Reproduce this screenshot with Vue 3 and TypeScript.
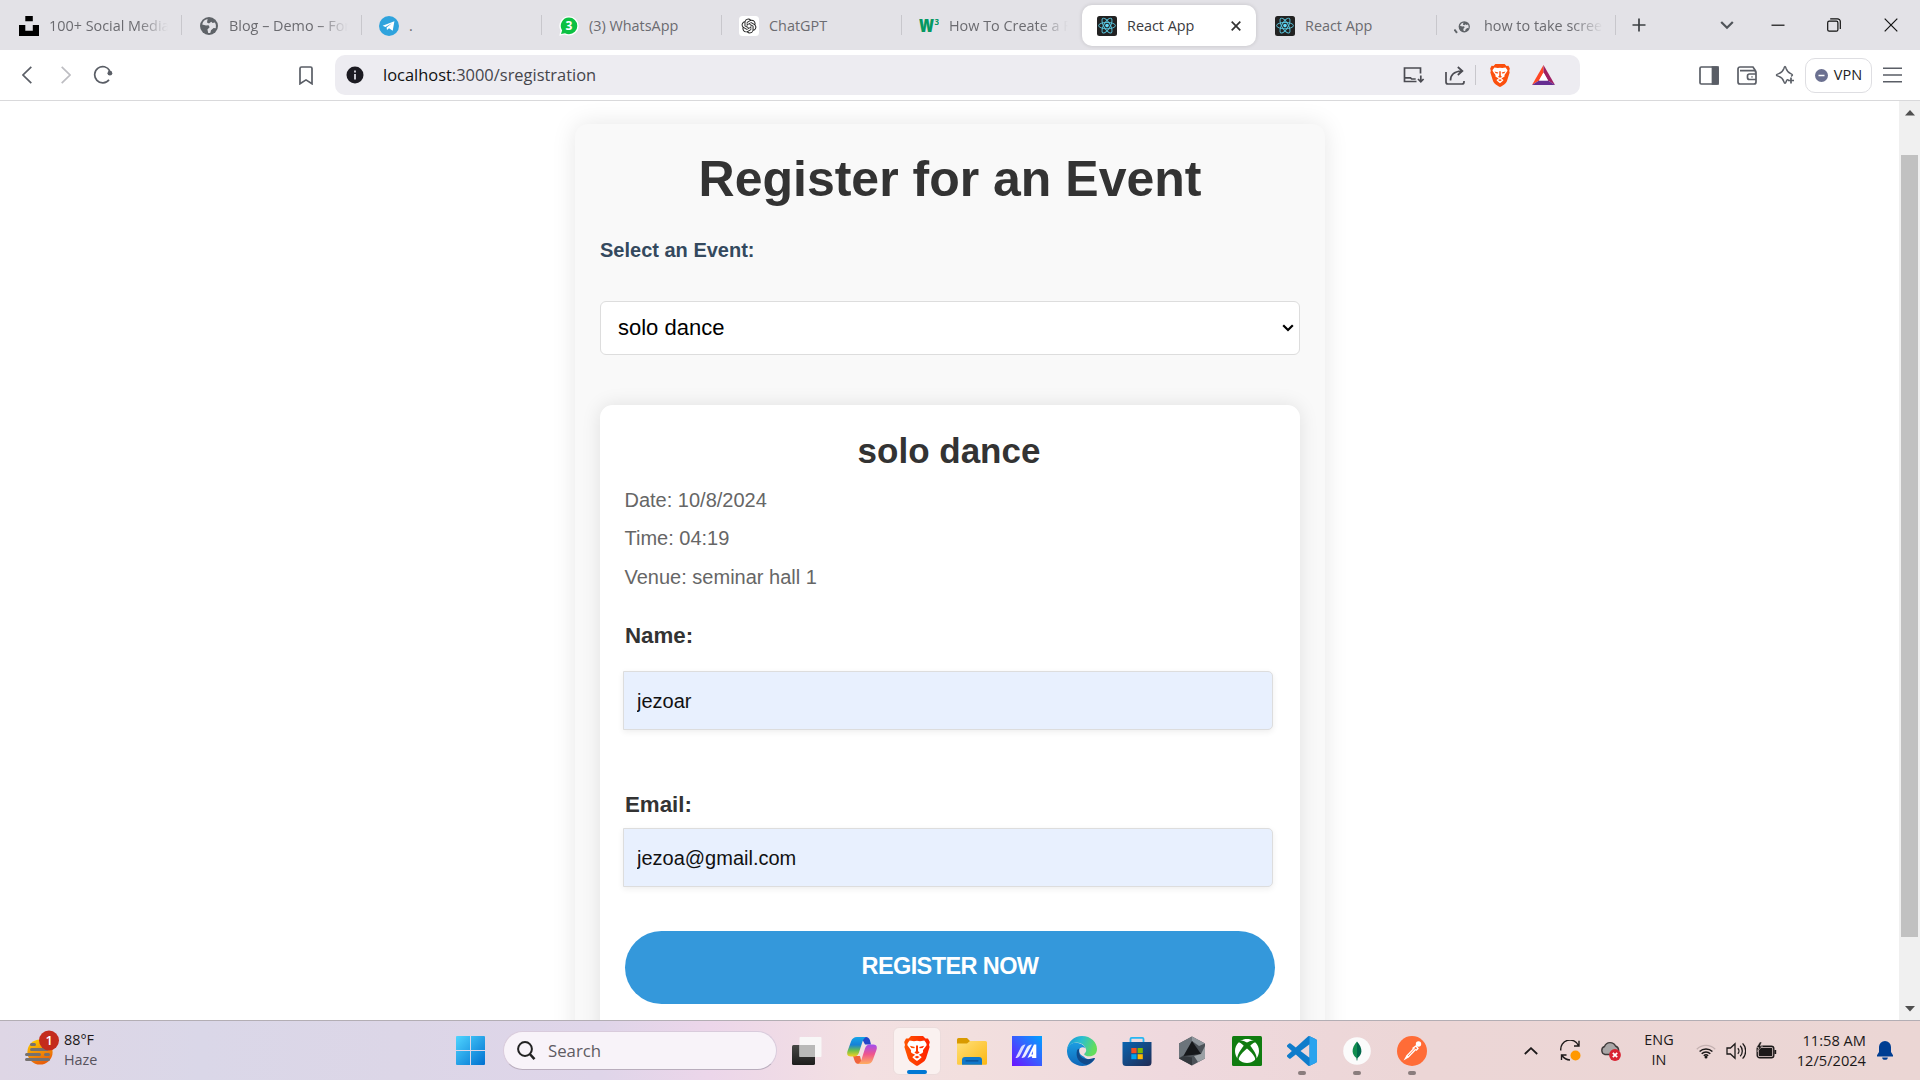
<script setup lang="ts">
import { ref } from 'vue'

interface Tab {
  icon: string
  title: string
  faded?: boolean
  active?: boolean
  divider?: boolean
}

const tabs: Tab[] = [
  { icon: 'unsplash', title: '100+ Social Media', faded: true, divider: true },
  { icon: 'globe', title: 'Blog – Demo – Forum', faded: true, divider: true },
  { icon: 'telegram', title: '.', divider: true },
  { icon: 'whatsapp', title: '(3) WhatsApp', divider: true },
  { icon: 'chatgpt', title: 'ChatGPT', divider: true },
  { icon: 'w3', title: 'How To Create a Form', faded: true },
  { icon: 'react', title: 'React App', active: true },
  { icon: 'react', title: 'React App', divider: true },
  { icon: 'search-globe', title: 'how to take screenshot', faded: true, divider: true },
]

const apps = [
  { id: 'taskview' },
  { id: 'copilot' },
  { id: 'brave', state: 'focused' },
  { id: 'folder' },
  { id: 'myasus' },
  { id: 'edge' },
  { id: 'store' },
  { id: 'crate' },
  { id: 'xbox' },
  { id: 'vscode', state: 'open' },
  { id: 'mongo', state: 'open' },
  { id: 'postman', state: 'open' },
]

const selected = ref('solo dance')
const details = ['Date: 10/8/2024', 'Time: 04:19', 'Venue: seminar hall 1']
const name = ref('jezoar')
const email = ref('jezoa@gmail.com')
</script>

<template>
  <div class="screen">
    <svg class="defs" width="0" height="0">
      <defs>
        <symbol id="lion" viewBox="0 0 26 30">
          <path d="M13 0 L19 0 L21.5 2.6 L24 2.4 L25.8 6 L25 9 L25.6 11 L22 22.5 Q21 25 18.5 26.6 L14.5 29.3 Q13 30.4 11.5 29.3 L7.5 26.6 Q5 25 4 22.5 L.4 11 L1 9 L.2 6 L2 2.4 L4.5 2.6 L7 0Z" />
          <path fill="#fff" d="M13 4.8 L16 5.3 L20.3 4.6 Q23 7.6 22.6 9.2 L18.9 14.2 Q19.7 16.6 17.4 17.4 L14.8 18.8 L17.6 21 Q17.8 21.6 13 25 Q8.200 21.6 8.400 21 L11.200 18.800 L8.600 17.400 Q6.300 16.600 7.100 14.200 L3.400 9.200 Q3 7.600 5.700 4.600 L10 5.300Z" />
          <path d="M5.800 9.800 L10.800 11 L10.300 12.300 L7.400 12Z M20.200 9.800 L15.200 11 L15.700 12.300 L18.600 12Z M12 9.500 L14 9.500 L14 15 L15.600 16.800 L13 18 L10.400 16.800 L12 15Z M10.400 21 L13 19.800 L15.600 21 L13 22.600Z" />
        </symbol>
        <symbol id="globe" viewBox="0 0 20 20">
          <circle cx="10" cy="10" r="9" fill="#5f6368" />
          <path fill="#e3e2e7" d="M8.600 3 Q4 4 3.200 8.400 L7 9.600 L9.600 9.200 L10.600 11.200 L8.400 13.600 L9.200 16.900 Q10.600 17.100 11.400 16.800 L12 14.200 L14.600 12 L16.800 12.200 Q17.600 9 16 6.400 L13.600 7 L12.200 5.800 L10 7.400 L8 6.600Z" />
        </symbol>
        <linearGradient id="gWin" x1="0" y1="0" x2="1" y2="1"><stop offset="0" stop-color="#4fd5ff" /><stop offset="1" stop-color="#0070d0" /></linearGradient>
        <linearGradient id="gSun" x1="0" y1="0" x2=".4" y2="1"><stop offset="0" stop-color="#ffd500" /><stop offset="1" stop-color="#e8600a" /></linearGradient>
        <linearGradient id="gBrave" x1="0" y1="0" x2="1" y2="0"><stop offset="0" stop-color="#ff5500" /><stop offset="1" stop-color="#ff1f00" /></linearGradient>
        <linearGradient id="gCopA" x1="0" y1="0" x2="0" y2="1"><stop offset="0" stop-color="#16a5e8" /><stop offset=".4" stop-color="#1681d8" /><stop offset=".7" stop-color="#6fbf4b" /><stop offset="1" stop-color="#f5d020" /></linearGradient>
        <linearGradient id="gCopB" x1="0" y1="0" x2="0" y2="1"><stop offset="0" stop-color="#a24cf0" /><stop offset=".5" stop-color="#f0558c" /><stop offset="1" stop-color="#ffb060" /></linearGradient>
        <linearGradient id="gFold" x1="0" y1="0" x2="1" y2="1"><stop offset="0" stop-color="#ffe07a" /><stop offset="1" stop-color="#fcb813" /></linearGradient>
        <linearGradient id="gAsus" x1="1" y1="0" x2="0" y2="1"><stop offset="0" stop-color="#00a2ff" /><stop offset=".5" stop-color="#3a5cff" /><stop offset="1" stop-color="#6a12ff" /></linearGradient>
        <linearGradient id="gEdgeA" x1="0" y1="0" x2="1" y2=".3"><stop offset="0" stop-color="#1690d8" /><stop offset=".5" stop-color="#2bbfd0" /><stop offset="1" stop-color="#62dd5c" /></linearGradient>
        <linearGradient id="gEdgeB" x1="0" y1="0" x2="0" y2="1"><stop offset="0" stop-color="#1b9de2" /><stop offset="1" stop-color="#0f66b8" /></linearGradient>
        <linearGradient id="gStore" x1="0" y1="0" x2="1" y2="1"><stop offset="0" stop-color="#0a64b0" /><stop offset="1" stop-color="#202c54" /></linearGradient>
        <linearGradient id="gView" x1="0" y1="0" x2="0" y2="1"><stop offset="0" stop-color="#474745" /><stop offset="1" stop-color="#1d1d1c" /></linearGradient>
      </defs>
    </svg>

    <header class="tabstrip">
      <div v-for="(tab, i) in tabs" :key="i" class="tab" :class="{ active: tab.active }">
        <svg class="favicon" viewBox="0 0 20 20">
          <path v-if="tab.icon === 'unsplash'" d="M6.300 0h7.500v5.300H6.300zM0 9h6.300v5.700h7.500V9H20v11H0z" />
          <use v-else-if="tab.icon === 'globe'" href="#globe" />
          <template v-else-if="tab.icon === 'telegram'">
            <circle cx="10" cy="10" r="10" fill="#2fa3dd" />
            <path fill="#fff" d="M3.600 9.700 L15.400 5.200 L13.700 14.800 L10 12.200 L8 14 L7.600 11.500 L12.800 7.300 L6.400 11.100Z" />
          </template>
          <template v-else-if="tab.icon === 'whatsapp'">
            <path d="M10 .2a9.700 9.700 0 0 1 0 19.400a10 10 0 0 1-4.300-1L.3 19.800 1.500 14.600A9.700 9.700 0 0 1 10 .2z" fill="#fff" />
            <path d="M10 1.600a8.300 8.300 0 0 1 0 16.600a8.500 8.500 0 0 1-4-1L2 18l1.100-3.600A8.300 8.300 0 0 1 10 1.600z" fill="#0cc143" />
            <text x="10" y="14.200" text-anchor="middle" class="wa-count">3</text>
          </template>
          <template v-else-if="tab.icon === 'chatgpt'">
            <rect width="20" height="20" rx="3.500" fill="#fff" />
            <path transform="translate(2.600 2.600) scale(.617)" fill="#222" d="M22.2819 9.8211a5.9847 5.9847 0 0 0-.5157-4.9108 6.0462 6.0462 0 0 0-6.5098-2.9A6.0651 6.0651 0 0 0 4.9807 4.1818a5.9847 5.9847 0 0 0-3.9977 2.9 6.0462 6.0462 0 0 0 .7427 7.0966 5.98 5.98 0 0 0 .511 4.9107 6.051 6.051 0 0 0 6.5146 2.9001A5.9847 5.9847 0 0 0 13.2599 24a6.0557 6.0557 0 0 0 5.7718-4.2058 5.9894 5.9894 0 0 0 3.9977-2.9001 6.0557 6.0557 0 0 0-.7475-7.0729zm-9.022 12.6081a4.4755 4.4755 0 0 1-2.8764-1.0408l.1419-.0804 4.7783-2.7582a.7948.7948 0 0 0 .3927-.6813v-6.7369l2.02 1.1686a.071.071 0 0 1 .038.052v5.5826a4.504 4.504 0 0 1-4.4945 4.4944zm-9.6607-4.1254a4.4708 4.4708 0 0 1-.5346-3.0137l.142.0852 4.783 2.7582a.7712.7712 0 0 0 .7806 0l5.8428-3.3685v2.3324a.0804.0804 0 0 1-.0332.0615L9.74 19.9502a4.4992 4.4992 0 0 1-6.1408-1.6464zM2.3408 7.8956a4.485 4.485 0 0 1 2.3655-1.9728V11.6a.7664.7664 0 0 0 .3879.6765l5.8144 3.3543-2.0201 1.1685a.0757.0757 0 0 1-.071 0l-4.8303-2.7865A4.504 4.504 0 0 1 2.3408 7.872zm16.5963 3.8558L13.1038 8.364 15.1192 7.2a.0757.0757 0 0 1 .071 0l4.8303 2.7913a4.4944 4.4944 0 0 1-.6765 8.1042v-5.6772a.79.79 0 0 0-.407-.667zm2.0107-3.0231l-.142-.0852-4.7735-2.7818a.7759.7759 0 0 0-.7854 0L9.409 9.2297V6.8974a.0662.0662 0 0 1 .0284-.0615l4.8303-2.7866a4.4992 4.4992 0 0 1 6.6802 4.66zM8.3065 12.863l-2.02-1.1638a.0804.0804 0 0 1-.038-.0567V6.0742a4.4992 4.4992 0 0 1 7.3757-3.4537l-.142.0805L8.704 5.459a.7948.7948 0 0 0-.3927.6813zm1.0976-2.3654l2.602-1.4998 2.6069 1.4998v2.9994l-2.5974 1.4997-2.6067-1.4997Z" />
          </template>
          <template v-else-if="tab.icon === 'w3'">
            <text x="0" y="16" class="w3-w" textLength="15" lengthAdjust="spacingAndGlyphs">w</text>
            <text x="15.400" y="8.800" class="w3-n">3</text>
          </template>
          <template v-else-if="tab.icon === 'react'">
            <rect width="20" height="20" rx="2.500" fill="#222" />
            <g fill="none" stroke="#58c4dc" stroke-width=".95">
              <ellipse cx="10" cy="9.600" rx="8.400" ry="3.200" />
              <ellipse cx="10" cy="9.600" rx="8.400" ry="3.200" transform="rotate(60 10 9.600)" />
              <ellipse cx="10" cy="9.600" rx="8.400" ry="3.200" transform="rotate(120 10 9.600)" />
            </g>
            <circle cx="10" cy="9.600" r="1.800" fill="#61dafb" />
          </template>
          <template v-else>
            <use href="#globe" x="4" y="4.500" width="12.500" height="12.500" />
            <path d="M.4 13.500l2.600 3.300" stroke="#5f6368" stroke-width="2" />
          </template>
        </svg>
        <span class="tab-title" :class="{ faded: tab.faded }">{{ tab.title }}</span>
        <svg v-if="tab.active" class="tab-close" viewBox="0 0 10 10"><path d="M.7.7l8.600 8.600M9.300.7L.7 9.300" /></svg>
        <i v-if="tab.divider" class="divider"></i>
      </div>
      <svg class="new-tab" viewBox="0 0 14 14"><path d="M7 .5v13M.5 7h13" /></svg>
      <div class="window-controls">
        <svg viewBox="0 0 14 14" class="chev"><path d="M1.200 4l5.800 5.800L12.800 4" /></svg>
        <svg viewBox="0 0 14 14"><path d="M.5 7.200h13" /></svg>
        <svg viewBox="0 0 14 14"><rect x=".7" y="3.200" width="10.200" height="10" rx="1.500" /><path d="M3.200.8h7.300a2.800 2.800 0 0 1 2.800 2.800v7.300" /></svg>
        <svg viewBox="0 0 14 14" class="close"><path d="M.7.7l12.600 12.600M13.300.7L.7 13.300" /></svg>
      </div>
    </header>

    <nav class="toolbar">
      <div class="nav-buttons">
        <svg width="10" height="18" viewBox="0 0 10 18"><path d="M9.300.8L1 9l8.300 8.200" /></svg>
        <svg class="dim" width="10" height="18" viewBox="0 0 10 18"><path d="M.7.8L9 9 .7 17.200" /></svg>
        <svg width="20" height="20" viewBox="0 0 20 20"><path d="M16 14.800A8 8.200 0 1 1 16.800 6" /><circle cx="16.900" cy="8.200" r="2.400" fill="#5a5e66" stroke="none" /></svg>
        <svg class="bookmark" width="14" height="19" viewBox="0 0 14 19"><path d="M1 2.500A1.500 1.500 0 0 1 2.500 1h9A1.500 1.500 0 0 1 13 2.500V17.800L7 13.900l-6 3.900z" /></svg>
      </div>
      <div class="omnibox">
        <svg width="18" height="18" viewBox="0 0 18 18"><circle cx="9" cy="9" r="8.500" fill="#1c1b22" /><path d="M9 4.500v2M9 8v5.500" stroke="#c9c8cf" stroke-width="2" /></svg>
        <span class="url"><b>localhost</b>:3000/sregistration</span>
        <svg class="install" width="22" height="16" viewBox="0 0 22 16"><path d="M17.500 6.500V1H1.500v13.500h12M1.500 10.800h6l1.200 1.200h4M17.800 8.500v6M15 12l2.800 2.800L20.600 12" /></svg>
        <svg class="share" width="20" height="19" viewBox="0 0 20 19"><path d="M1 6v10a2 2 0 0 0 2 2h14a2 2 0 0 0 2-2v-1M5.500 14.500C5.500 9 8.500 5.500 16.500 5M12.800 1l4.600 4-4.600 4" /></svg>
        <i class="divider"></i>
        <svg class="shield" width="20" height="23" viewBox="0 0 26 30" fill="#fb4f0d"><use href="#lion" /></svg>
        <svg class="bat" width="23" height="20" viewBox="0 0 23 20"><path fill="#ff4724" d="M11.500 0L0 20l7-4.400 4.500-8z" /><path fill="#9e1f63" d="M11.500 0L23 20l-7-4.400-4.500-8z" /><path fill="#662d91" d="M0 20h23l-7-4.400H7z" /><path fill="#fff" d="M11.500 7.600l4.500 8H7z" /></svg>
      </div>
      <div class="actions">
        <svg width="20" height="19" viewBox="0 0 20 19"><rect x="1" y="1" width="18" height="17" rx="1.300" /><path d="M13.500 1H19v17h-5.500z" fill="#5a5e66" /></svg>
        <svg width="20" height="19" viewBox="0 0 20 19"><path d="M18.500 6.500V4.800L16 1H3A2 2 0 0 0 1 3v13a2 2 0 0 0 2 2h14a2 2 0 0 0 2-2V6.500a1.800 1.800 0 0 0-1.800-1.800H3M19 8h-6.500a2 2 0 0 0-2 2v1.500a2 2 0 0 0 2 2H19M14.500 10.800h1" /></svg>
        <svg width="20" height="20" viewBox="0 0 20 20"><path d="M13.500 15Q12 14 11.200 16.500Q10 20 8.800 16.500Q7.500 12.500 3.800 11.400Q-1 10 3.800 8.600Q7.500 7.500 8.800 3.800Q10 -1 11.200 3.800Q12.500 7.500 15.800 8.600Q19 10 16 11.200" stroke-width="1.500" /><path d="M16 12.500v6M13 15.500h6" /></svg>
        <button class="vpn"><svg width="13" height="13" viewBox="0 0 13 13"><circle cx="6.500" cy="6.500" r="6.500" fill="#6b7090" /><path d="M3.500 6.500h6" stroke="#fff" stroke-width="1.500" /></svg>VPN</button>
        <svg width="19" height="16" viewBox="0 0 19 16"><path d="M0 1.200h19M0 8h19M0 14.800h19" stroke-width="1.600" /></svg>
      </div>
    </nav>

    <div class="viewport">
      <main class="page">
        <section class="panel">
          <h1>Register for an Event</h1>
          <label class="select-label">Select an Event:</label>
          <div class="select-wrap">
            <select v-model="selected"><option>solo dance</option></select>
            <svg width="12" height="8" viewBox="0 0 12 8"><path d="M1.200 1.200L6 6l4.800-4.800" /></svg>
          </div>
          <form class="event" @submit.prevent>
            <h2>{{ selected }}</h2>
            <p v-for="line in details" :key="line">{{ line }}</p>
            <label class="name-label">Name:</label>
            <input v-model="name" type="text" class="name-input" />
            <label class="email-label">Email:</label>
            <input v-model="email" type="text" class="email-input" />
            <button class="submit">REGISTER NOW</button>
          </form>
        </section>
      </main>
      <aside class="scrollbar">
        <svg width="10" height="6" viewBox="0 0 10 6"><path d="M5 0l5 5.500H0z" /></svg>
        <div class="thumb"></div>
        <svg width="10" height="6" viewBox="0 0 10 6"><path d="M5 5.500L0 0h10z" /></svg>
      </aside>
    </div>

    <footer class="taskbar">
      <div class="weather">
        <svg width="34" height="36" viewBox="0 0 34 36">
          <circle cx="15" cy="22" r="12.600" fill="url(#gSun)" />
          <g stroke="#757170" stroke-width="3" stroke-linecap="round"><path d="M6.500 14.500h3M6.500 19.500H22M1.500 24.500h13M20.500 24.500h3M1.500 29.500h22" /></g>
          <circle cx="24" cy="10.500" r="10" fill="#c42b1c" />
          <text x="24.200" y="15.300" text-anchor="middle" class="badge">1</text>
        </svg>
        <div class="weather-text"><span>88°F</span><span class="muted">Haze</span></div>
      </div>
      <svg class="start" width="29" height="29" viewBox="0 0 29 29"><path fill="url(#gWin)" d="M1 0h13v14H0V1a1 1 0 0 1 1-1zM15 0h13a1 1 0 0 1 1 1v13H15zM0 15h14v14H1a1 1 0 0 1-1-1zM15 15h14v13a1 1 0 0 1-1 1H15z" /></svg>
      <div class="search">
        <svg width="19" height="20" viewBox="0 0 19 20"><circle cx="8" cy="8" r="6.900" /><path d="M12.800 13l4.700 5.200" stroke-width="2.600" /></svg>
        <span>Search</span>
      </div>
      <div class="apps">
        <div v-for="app in apps" :key="app.id" class="app" :class="app.state">
          <svg v-if="app.id === 'taskview'" width="30" height="30" viewBox="0 0 30 30"><rect x="0" y="9" width="23" height="20" rx="1.500" fill="url(#gView)" /><rect x="7.500" y="1" width="22" height="20" rx="1" fill="#f8f8f8" fill-opacity=".92" /><path d="M7.500 9H23v12H7.500z" fill="#b9b9b8" /></svg>
          <svg v-else-if="app.id === 'copilot'" width="30" height="30" viewBox="0 0 30 30">
            <path fill="#2447c9" d="M14 1h5q3 0 4 3.500l1 4h-6z" />
            <path fill="#f0643c" d="M6 20h7l2 8h-3q-3.500 0-4.500-3.500z" />
            <path fill="url(#gCopA)" d="M10 1h9q-2.500 1-3.500 4.500L12 16.500Q10.800 20.500 7 20.500H4Q-.8 20.500.4 15.500L4 5.500Q5.500 1 10 1z" />
            <path fill="url(#gCopB)" d="M20 28h-9q2.500-1 3.500-4.500L18 12.500Q19.200 8.500 23 8.500h3q4.800 0 3.600 5L26 23.500Q24.500 28 20 28z" />
          </svg>
          <svg v-else-if="app.id === 'brave'" width="26" height="30" viewBox="0 0 26 30" fill="url(#gBrave)"><use href="#lion" /></svg>
          <svg v-else-if="app.id === 'folder'" width="30" height="30" viewBox="0 0 30 30"><path d="M0 3.500A1.500 1.500 0 0 1 1.500 2H10l3 3v6H0z" fill="#d99a00" /><path d="M0 7.500h10L13 5h15.500A1.500 1.500 0 0 1 30 6.500v21a1.200 1.200 0 0 1-1.200 1.200H1.200A1.200 1.200 0 0 1 0 27.500z" fill="url(#gFold)" /><path d="M5 28.700V24a3 3 0 0 1 3-3h14a3 3 0 0 1 3 3v4.700z" fill="#0f77c9" /><path d="M9 24.800h12" stroke="#0a4f91" stroke-width="1.200" stroke-linecap="round" /></svg>
          <svg v-else-if="app.id === 'myasus'" width="30" height="30" viewBox="0 0 30 30"><path d="M0 0h30v30H0z" fill="url(#gAsus)" /><path d="M3.500 22L8.500 12Q10 8.500 13.500 8.500L8.500 18.500Q7 22 3.500 22z" fill="#fff" fill-opacity=".8" /><path d="M9.500 22L14.500 12Q16 8.500 20 8.500L14.500 18.500Q13 22 9.500 22z" fill="#fff" fill-opacity=".9" /><path d="M15.500 22L22 8.500h2.300V22h-4.200v-1.500h-1.200z" fill="#fff" /><path d="M19.300 18.500h1.600v-3.600z" fill="#3a5cff" /></svg>
          <svg v-else-if="app.id === 'edge'" width="30" height="30" viewBox="0 0 30 30">
            <path fill="url(#gEdgeB)" d="M0 14C1 8 6 6 11 7c5 1 8 4 8 7.500 0 3-2 4-2 5.500 0 2 3 3.200 6 3.200 2.500 0 4.500-1.200 5-.700C25.500 27 21 30 15.500 30 6.500 30-.5 23 0 14z" />
            <path fill="#114a8b" d="M10 14.500c-1.500 6 1 12.500 9.500 14.200 3.500-1 6.500-3 8.300-5.900.3-.6-.2-1-.8-.7C18 25.500 10.500 21 12.200 13c.2-.8-1.700.3-2.200 1.500z" />
            <path fill="url(#gEdgeA)" d="M0 14C.7 6 7 0 15 0c9 0 15 6.500 15 13 0 5-3.500 7.300-7.500 7.300-3.500 0-5.300-1.300-5.300-2.100 0-.7 1.800-1.500 1.800-4.200C19 9.500 14 6.500 9.500 6.500 5 6.500 1 9.500 0 14z" />
            <path fill="#f1dcdf" d="M12.200 14.500c0-2 1.500-3.200 3.500-3.200 2.300 0 3.500 1.200 3.500 3 0 2.500-2 3-2 4.200 0 1 1.300 2 3.500 2.200-4.500.9-8.500-2-8.500-6.200z" />
          </svg>
          <svg v-else-if="app.id === 'store'" width="30" height="30" viewBox="0 0 30 30"><path d="M8.500 7V3A1.200 1.200 0 0 1 9.700 1.800h10.600A1.200 1.200 0 0 1 21.500 3v4" fill="none" stroke="#27b7f2" stroke-width="1.800" /><path d="M.5 6h29v20.500a3.500 3.500 0 0 1-3.500 3.500H4a3.500 3.500 0 0 1-3.500-3.500z" fill="url(#gStore)" /><path fill="#f25022" d="M9.300 12h5.300v5.200H9.300z" /><path fill="#7fba00" d="M15.600 12h5.200v5.200h-5.200z" /><path fill="#00a4ef" d="M9.300 18.200h5.300v5H9.300z" /><path fill="#ffb900" d="M15.600 18.200h5.200v5h-5.200z" /></svg>
          <svg v-else-if="app.id === 'crate'" width="30" height="30" viewBox="0 0 30 30"><path fill="#4b5157" d="M15 .5L28 7.500v15L15 29.500 2 22.500v-15z" /><path fill="#90979d" d="M15 .5L28 7.500 22 10 15 5z" /><path fill="#6c747b" d="M2 7.500L15 .5v4.500L7 19 2 22z" /><path fill="#16181b" d="M15 5L24 18 6.500 20z" /><path fill="#33383d" d="M2 22.500L6.500 20 15 21.500v8z" /><path fill="#9ba1a5" d="M28 10v12.500L21 26 17 20l7-2z" /></svg>
          <svg v-else-if="app.id === 'xbox'" width="30" height="30" viewBox="0 0 30 30"><rect width="30" height="30" rx="1.500" fill="#107c10" /><path transform="translate(3 3)" fill="#fff" d="M4.102 21.033C6.211 22.881 8.977 24 12 24c3.026 0 5.789-1.119 7.902-2.967 1.877-1.912-4.316-8.709-7.902-11.417-3.582 2.708-9.779 9.505-7.898 11.417zm11.16-14.406c2.500 2.961 7.484 10.313 6.076 12.912C23.002 17.480 24 14.861 24 12.004c0-3.340-1.365-6.362-3.570-8.536 0 0-.027-.022-.082-.042-.063-.022-.152-.045-.281-.045-.592 0-1.985.434-4.805 3.246zM3.654 3.426c-.057.020-.082.041-.086.042C1.365 5.642 0 8.664 0 12.004c0 2.854.998 5.473 2.661 7.533-1.401-2.605 3.579-9.951 6.080-12.910-2.820-2.813-4.216-3.245-4.806-3.245-.131 0-.223.021-.281.046v-.002zM12 3.551S9.055 1.828 6.755 1.746c-.903-.033-1.454.295-1.521.339C7.379.646 9.659 0 11.984 0H12c2.334 0 4.605.646 6.766 2.085-.068-.046-.615-.372-1.520-.339C14.946 1.828 12 3.545 12 3.545v.006z" /></svg>
          <svg v-else-if="app.id === 'vscode'" width="30" height="30" viewBox="0 0 24 24"><path fill="#0f7ccb" d="M23.15 2.587L18.210.21a1.494 1.494 0 0 0-1.705.29l-9.460 8.630-4.120-3.128a.999.999 0 0 0-1.276.057L.327 7.261A1 1 0 0 0 .326 8.740L3.899 12 .326 15.260a1 1 0 0 0 .001 1.479L1.650 17.940a.999.999 0 0 0 1.276.057l4.120-3.128 9.460 8.630a1.492 1.492 0 0 0 1.704.29l4.942-2.377A1.500 1.500 0 0 0 24 20.060V3.939a1.500 1.500 0 0 0-.85-1.352zm-5.146 14.861L10.826 12l7.178-5.448v10.896z" /><path fill="#2ba3ee" d="M18 .2l5.150 2.387a1.500 1.500 0 0 1 .85 1.352V20.060a1.500 1.500 0 0 1-.85 1.352L18 23.800z" /></svg>
          <svg v-else-if="app.id === 'mongo'" width="30" height="30" viewBox="0 0 30 30"><circle cx="15" cy="15" r="13.800" fill="#fbfbfb" /><path fill="#00684a" d="M15 5.500C18 9 19.600 12 19.400 15.500c-.2 3-1.800 5-3.800 6.500l-.3 2.500h-.6z" /><path fill="#118d4f" d="M15 5.500C12 9 10.400 12 10.600 15.500c.2 3 1.800 5 3.800 6.500l.6 2.500z" /></svg>
          <svg v-else width="30" height="30" viewBox="0 0 30 30"><circle cx="15" cy="15" r="15" fill="#ff6c37" /><path fill="#fff" d="M6.500 24.500l3-5.200L17 11.500l2.300 2.300-7.600 7.600z" /><circle cx="21.500" cy="8" r="2.700" fill="#fff" /><path d="M11 20l8-8.500" stroke="#ff6c37" stroke-width=".8" /><path d="M15.500 12.500l3.500-2.500 2 2.500-2 2" fill="none" stroke="#fff" stroke-width="1.300" /></svg>
          <i v-if="app.state" class="mark"></i>
        </div>
      </div>
      <div class="tray">
        <svg class="t-up" width="14" height="8" viewBox="0 0 14 8"><path d="M.8 7L7 1.200 13.200 7" /></svg>
        <svg class="t-sync" width="21" height="21" viewBox="0 0 21 21"><path d="M.8 10.500A9.300 9.300 0 0 1 18.500 5.500M19 .8v5.200h-5M1.500 20v-5h5M2 15.500Q5 19.800 10 20" stroke-width="1.400" /><circle cx="15.500" cy="15.500" r="5" fill="#ff9800" stroke="none" /></svg>
        <svg class="t-cloud" width="21" height="20" viewBox="0 0 21 20"><path d="M5 13.500a4.200 4.200 0 0 1-.5-8A6 6 0 0 1 15.500 5q3 1 3.200 4.500L14 13.500z" fill="#a9a6a6" stroke="#3f3b3b" stroke-width="1.400" /><circle cx="15" cy="14" r="5.900" fill="#d92332" stroke="none" /><path d="M12.800 11.800l4.400 4.400M17.200 11.800l-4.400 4.400" stroke="#fff" stroke-width="1.700" /></svg>
        <div class="lang"><span>ENG</span><span>IN</span></div>
        <svg class="t-wifi" width="20" height="16" viewBox="0 0 20 16"><path d="M.8 6.200a13 13 0 0 1 18.400 0" stroke="#c5b2b2" stroke-width="1.300" /><path d="M3.600 8.500a9.200 9.200 0 0 1 12.800 0M5.700 10.800a6.200 6.200 0 0 1 8.600 0M7.800 12.800a3.200 3.200 0 0 1 4.400 0" stroke-width="1.500" /><circle cx="10" cy="14" r="1.500" fill="#1c1919" stroke="none" /></svg>
        <svg class="t-vol" width="20" height="18" viewBox="0 0 20 18"><path d="M1 6h3.500L9 1.800v14.400L4.500 12H1zM11.800 6.200a4 4 0 0 1 0 5.600M14.200 3.800a7.500 7.500 0 0 1 0 10.400M16.600 1.400a11 11 0 0 1 0 15.200" stroke-width="1.300" /></svg>
        <svg class="t-bat" width="21" height="17" viewBox="0 0 21 17"><rect x="1.200" y="4.200" width="16.600" height="11.600" rx="2.500" stroke-width="1.400" /><rect x="2.700" y="5.700" width="13.600" height="8.600" rx="1" fill="#1c1919" stroke="none" /><path d="M19.300 8v4" stroke-width="1.800" /><path d="M3.800 0L.5 5.500h2.300L1.500 9.500 6.500 4H4.200L5.800 0z" fill="#1c1919" stroke="#ecd8d7" stroke-width=".5" /></svg>
        <div class="clock"><span>11:58 AM</span><span>12/5/2024</span></div>
        <svg class="t-bell" width="16" height="19" viewBox="0 0 16 19"><path d="M8 0a6 6 0 0 1 6 6v5l2 3.200V15.500H0V14.200L2 11V6A6 6 0 0 1 8 0zM5.200 16.500h5.600a2.800 2.300 0 0 1-5.600 0z" fill="#003e92" stroke="none" /></svg>
      </div>
    </footer>
  </div>
</template>

<style>
html,
body {
  margin: 0;
  overflow: hidden;
}
</style>

<style scoped>
* {
  box-sizing: border-box;
}
.screen {
  width: 1920px;
  height: 1080px;
  display: flex;
  flex-direction: column;
  overflow: hidden;
  background: #fff;
  font-family: 'Open Sans', 'Noto Sans', sans-serif;
}
.defs {
  position: absolute;
}
svg {
  display: block;
  flex: none;
}

/* Tab strip */
.tabstrip {
  height: 50px;
  flex: none;
  display: flex;
  align-items: center;
  padding-left: 2px;
  background: #e3e2e7;
}
.tab {
  width: 180px;
  height: 50px;
  flex: none;
  display: flex;
  align-items: center;
  padding-left: 17px;
}
.tab.active {
  width: 174px;
  height: 41px;
  margin: 1px 2px 0 0;
  padding-left: 15px;
  border-radius: 10px;
  background: #fff;
  box-shadow: 0 0 4px rgba(0, 0, 0, 0.14);
}
.tab.active ~ .tab {
  width: 179px;
}
.favicon {
  width: 20px;
  height: 20px;
  margin-top: 2px;
}
.tab.active .favicon {
  margin-top: 1px;
}
.wa-count {
  font: 700 12px 'Open Sans', sans-serif;
  fill: #fff;
}
.w3-w {
  font: 800 22px 'Open Sans', sans-serif;
  fill: #059862;
}
.w3-n {
  font: 700 8px 'Open Sans', sans-serif;
  fill: #059862;
}
.tab-title {
  width: 121px;
  margin-left: 10px;
  padding-top: 2px;
  overflow: hidden;
  white-space: nowrap;
  font-size: 14.400px;
  line-height: 24px;
  color: #6b6b70;
}
.tab-title.faded {
  mask-image: linear-gradient(90deg, #000 88px, transparent 119px);
}
.tab.active .tab-title {
  width: 103px;
  padding-top: 1px;
  color: #3b3b40;
}
.tab-close {
  width: 10px;
  height: 10px;
  margin-left: 1px;
  fill: none;
  stroke: #333;
  stroke-width: 1.700;
}
.divider {
  width: 1px;
  height: 20px;
  flex: none;
  margin-left: auto;
  background: #c8c7cc;
}
.new-tab {
  width: 14px;
  height: 14px;
  margin-left: 16px;
  stroke: #3c4043;
  stroke-width: 1.700;
}
.window-controls {
  margin-left: auto;
  margin-right: 22px;
  display: flex;
  gap: 42px;
}
.window-controls svg {
  width: 14px;
  height: 14px;
  fill: none;
  stroke: #111;
  stroke-width: 1.200;
}
.window-controls .chev {
  margin-right: -5px;
  stroke: #50545a;
  stroke-width: 2.200;
}
.window-controls .close {
  margin-left: 1px;
}

/* Toolbar */
.toolbar {
  height: 51px;
  flex: none;
  display: flex;
  align-items: center;
  border-bottom: 1px solid #d9d9db;
  background: #fff;
}
.nav-buttons {
  width: 335px;
  display: flex;
  align-items: center;
  padding-left: 22px;
  gap: 29px;
}
.nav-buttons svg,
.actions > svg {
  fill: none;
  stroke: #5a5e66;
  stroke-width: 1.700;
}
.nav-buttons .dim {
  stroke: #bdbdc2;
}
.nav-buttons svg:nth-child(3) {
  margin-left: -7px;
}
.nav-buttons .bookmark {
  margin-left: 157px;
}
.omnibox {
  width: 1245px;
  height: 40px;
  display: flex;
  align-items: center;
  padding: 0 25px 0 11px;
  border-radius: 10px;
  background: #edecf1;
}
.url {
  margin-left: 19px;
  margin-right: auto;
  font-size: 16.450px;
  line-height: 24px;
  color: #45454c;
}
.url b {
  font-weight: 400;
  color: #111;
}
.install,
.share {
  fill: none;
  stroke: #4b4b52;
  stroke-width: 1.700;
}
.share {
  margin-left: 20px;
}
.omnibox .divider {
  margin: 0 14px 0 10px;
}
.bat {
  margin-left: 22px;
}
.actions {
  margin-left: auto;
  margin-right: 18px;
  display: flex;
  align-items: center;
  gap: 18px;
}
.vpn {
  width: 67px;
  height: 35px;
  display: flex;
  align-items: center;
  justify-content: center;
  gap: 6px;
  margin: 0 -7px 0 -8px;
  padding: 0;
  border: 1px solid #dedee2;
  border-radius: 10px;
  background: #fff;
  color: #222;
  font: 14.500px/24px 'Open Sans', sans-serif;
}

/* Page */
.viewport {
  height: 919px;
  flex: none;
  display: flex;
  overflow: hidden;
  font-family: 'Liberation Sans', Arial, sans-serif;
}
.page {
  flex: 1;
  display: flex;
  justify-content: center;
  align-items: flex-start;
  padding-top: 23px;
}
.panel {
  width: 750px;
  height: 980px;
  margin-left: 1px;
  padding: 25px;
  display: flex;
  flex-direction: column;
  border-radius: 12.500px;
  background: #f9f9f9;
  box-shadow: 0 0 25px rgba(0, 0, 0, 0.1);
}
h1 {
  margin: 0;
  text-align: center;
  font-size: 50px;
  line-height: 60px;
  color: #333;
}
.select-label {
  margin-top: 29px;
  font-size: 20px;
  line-height: 24px;
  font-weight: 700;
  color: #34495e;
}
.select-wrap {
  display: grid;
  align-items: center;
  margin-top: 39px;
}
.select-wrap > * {
  grid-area: 1 / 1;
}
.select-wrap svg {
  justify-self: end;
  margin-right: 6px;
  fill: none;
  stroke: #000;
  stroke-width: 2.200;
}
select {
  width: 100%;
  height: 54px;
  appearance: none;
  padding: 0 17px 2px;
  border: 1px solid #ddd;
  border-radius: 6px;
  background: #fff;
  color: #000;
  font: 22px 'Liberation Sans', Arial, sans-serif;
}
.event {
  height: 680px;
  margin-top: 50px;
  padding: 25px;
  display: flex;
  flex-direction: column;
  border-radius: 12.500px;
  background: #fff;
  box-shadow: 0 0 19px rgba(0, 0, 0, 0.1);
}
h2 {
  margin: 0 1px 9px -1px;
  text-align: center;
  font-size: 35px;
  line-height: 42px;
  color: #333;
}
p {
  margin: 0 0 0 -0.500px;
  font-size: 20px;
  line-height: 38.300px;
  color: #666;
}
.name-label,
.email-label {
  font-size: 22.300px;
  line-height: 28px;
  font-weight: 700;
  color: #333;
}
.name-label {
  margin-top: 26px;
}
.email-label {
  margin-top: 61px;
}
input {
  width: 650px;
  height: 59px;
  margin-left: -2px;
  padding: 2px 13px 0;
  border: 1px solid #ddd;
  border-radius: 0 5px 5px 0;
  background: #e8f0fe;
  box-shadow: 0 2px 6px rgba(0, 0, 0, 0.07);
  color: #111;
  font: 20px 'Liberation Sans', Arial, sans-serif;
}
.name-input {
  margin-top: 21px;
}
.email-input {
  margin-top: 9px;
}
.submit {
  height: 73px;
  flex: none;
  margin-top: 44px;
  padding-bottom: 3px;
  border: 0;
  border-radius: 37px;
  background: #3498db;
  color: #fff;
  font: 700 23.500px 'Liberation Sans', Arial, sans-serif;
  letter-spacing: -0.600px;
}
.scrollbar {
  width: 21px;
  flex: none;
  display: flex;
  flex-direction: column;
  align-items: center;
  padding: 9px 0 8px;
  background: #f0f0f0;
  fill: #505050;
}
.thumb {
  width: 17px;
  height: 782px;
  margin: 39px 0 auto;
  background: #c1c1c1;
}

/* Taskbar */
.taskbar {
  height: 60px;
  flex: none;
  display: flex;
  align-items: center;
  border-top: 1px solid #b3aeb4;
  background: linear-gradient(90deg, #ded6e5 0, #dad7e8 200px, #dcd6e7 400px, #dfd5e9 600px, #ecd6ea 710px, #f3e0e2 860px, #f2dfde 970px, #efd9de 1170px, #ecd6d6 1420px, #ebd6d4 1920px);
  color: #1c1919;
  font-size: 15px;
}
.weather {
  width: 456px;
  display: flex;
  align-items: center;
  padding-left: 25px;
}
.weather > svg {
  margin-top: -5px;
}
.badge {
  font: 600 13px 'Open Sans', sans-serif;
  fill: #fff;
}
.weather-text,
.lang,
.clock {
  display: flex;
  flex-direction: column;
  padding-bottom: 2px;
  font-size: 14.400px;
  line-height: 20px;
}
.weather-text {
  margin-left: 5px;
}
.muted {
  color: #57535d;
}
.search {
  width: 274px;
  height: 39px;
  display: flex;
  align-items: center;
  margin-left: 17.500px;
  padding-left: 13.500px;
  border: 1px solid #d9cbdc;
  border-bottom-color: #b9adbd;
  border-radius: 20px;
  background: #f8f3f9;
}
.search svg {
  fill: none;
  stroke: #222;
  stroke-width: 2;
}
.search span {
  margin-left: 12px;
  font-size: 16.800px;
  color: #5f5b62;
}
.apps {
  display: flex;
  margin-left: 2.500px;
}
.app {
  width: 55px;
  height: 48px;
  display: grid;
  place-items: center;
}
.app > * {
  grid-area: 1 / 1;
}
.app.focused {
  width: 48px;
  margin: 0 3.500px;
  border: 1px solid #ecdcdc;
  border-radius: 6px;
  background: #faf1f0;
}
.mark {
  align-self: end;
  width: 8px;
  height: 4px;
  border-radius: 2px;
  background: #8a7d7d;
}
.focused .mark {
  width: 20px;
  background: #0078d4;
}
.tray {
  display: flex;
  align-items: center;
  margin-left: auto;
  margin-right: 27px;
}
.tray svg {
  fill: none;
  stroke: #1c1919;
  stroke-width: 1.800;
}
.t-sync {
  margin-left: 22px;
}
.t-cloud {
  margin-left: 19px;
}
.lang {
  width: 50px;
  margin-left: 13px;
  margin-right: 12px;
  align-items: center;
}
.t-vol {
  margin-left: 10px;
}
.t-bat {
  margin-left: 10px;
}
.clock {
  width: 89px;
  align-items: flex-end;
  font-size: 14.650px;
}
.t-bell {
  margin-left: 11px;
}
</style>
